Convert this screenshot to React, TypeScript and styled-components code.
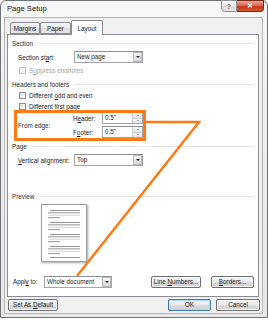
import React from "react";
import styled, { createGlobalStyle } from "styled-components";

const GlobalStyle = createGlobalStyle`
  html, body {
    margin: 0;
    padding: 0;
    background: #ffffff;
  }
`;

const ORANGE = "#ff7a14";

const Window = styled.div`
  position: relative;
  box-sizing: border-box;
  width: 268px;
  height: 318px;
  display: flex;
  flex-direction: column;
  padding: 0 4px 3px 3px;
  border: 1px solid #6f7378;
  border-radius: 6px 6px 0 0;
  background: linear-gradient(180deg, #f8f8f8 0%, #eeeeee 30%, #e8e8e8 100%);
  font-family: "Liberation Sans", Arial, sans-serif;
  font-size: 6.3px;
  color: #1b1b1b;
`;

const TitleBar = styled.div`
  height: 16px;
  display: flex;
  align-items: flex-start;
  justify-content: space-between;
`;

const Title = styled.div`
  padding-left: 3px;
  line-height: 15px;
  font-size: 7.6px;
  color: #111;
`;

const CaptionButtons = styled.div`
  display: flex;
  margin-top: -1px;
  margin-right: -1px;
`;

const CaptionButton = styled.div<{ $close?: boolean }>`
  box-sizing: border-box;
  width: ${(p) => (p.$close ? 27 : 16)}px;
  height: 12px;
  display: flex;
  align-items: center;
  justify-content: center;
  border: 1px solid ${(p) => (p.$close ? "#7a2a1c" : "#8d9196")};
  border-left-width: ${(p) => (p.$close ? 0 : 1)}px;
  border-radius: ${(p) => (p.$close ? "0 0 4px 0" : "0 0 0 4px")};
  background: ${(p) =>
    p.$close
      ? "linear-gradient(180deg, #e9a697 0%, #d8684e 45%, #c6391c 55%, #d2552f 100%)"
      : "linear-gradient(180deg, #fafafa 0%, #ebebeb 45%, #dcdcdc 55%, #e6e6e6 100%)"};
  color: ${(p) => (p.$close ? "#ffffff" : "#7b7f85")};
  font-size: 7px;
  font-weight: bold;
`;

const Client = styled.div`
  flex: 1;
  display: flex;
  flex-direction: column;
  border: 1px solid #b6b6b6;
  background: #f0f0f0;
`;

const TabStrip = styled.div`
  height: 16px;
  display: flex;
  align-items: flex-end;
  padding-left: 5px;
`;

const Tab = styled.div<{ $active?: boolean; $w: number }>`
  position: relative;
  z-index: ${(p) => (p.$active ? 2 : 0)};
  box-sizing: border-box;
  width: ${(p) => p.$w}px;
  height: ${(p) => (p.$active ? 15 : 12)}px;
  margin-bottom: ${(p) => (p.$active ? -1 : 0)}px;
  display: flex;
  align-items: center;
  justify-content: center;
  border: 1px solid #898c95;
  border-bottom: ${(p) => (p.$active ? "none" : "1px solid #898c95")};
  border-radius: 2px 2px 0 0;
  background: ${(p) =>
    p.$active
      ? "#ffffff"
      : "linear-gradient(180deg, #f4f4f4 0%, #ebebeb 50%, #dedede 51%, #e5e5e5 100%)"};
  color: #1b1b1b;
`;

const Panel = styled.div`
  position: relative;
  z-index: 1;
  box-sizing: border-box;
  height: 263px;
  margin: 0 3px 0 2px;
  padding: 0 4px;
  display: flex;
  flex-direction: column;
  border: 1px solid #898c95;
  background: #ffffff;
`;

const GroupHeading = styled.div<{ $mt: number }>`
  height: 10px;
  margin-top: ${(p) => p.$mt}px;
  display: flex;
  align-items: center;
  color: #2a2a2a;

  &::after {
    content: "";
    flex: 1;
    height: 1px;
    margin-left: 5px;
    background: #e4e4e4;
  }
`;

const FieldRow = styled.div<{ $mt: number }>`
  height: 12px;
  margin-top: ${(p) => p.$mt}px;
  padding-left: 6px;
  display: flex;
  align-items: center;
`;

const FieldLabel = styled.span<{ $w: number }>`
  flex: none;
  width: ${(p) => p.$w}px;
  white-space: nowrap;
`;

const SelectBox = styled.div<{ $w: number }>`
  box-sizing: border-box;
  flex: none;
  width: ${(p) => p.$w}px;
  height: 12px;
  display: flex;
  align-items: center;
  border: 1px solid #a3a6ad;
  border-top-color: #8e9198;
  background: #ffffff;
`;

const SelectText = styled.span`
  flex: 1;
  padding-left: 2px;
  line-height: 10px;
  white-space: nowrap;
`;

const SelectArrow = styled.span`
  box-sizing: border-box;
  width: 9px;
  height: 10px;
  display: flex;
  align-items: center;
  justify-content: center;
  border: 1px solid #b5b7bb;
  background: linear-gradient(180deg, #f7f7f7 0%, #e7e7e7 50%, #d9d9d9 100%);

  &::before {
    content: "";
    border-left: 2px solid transparent;
    border-right: 2px solid transparent;
    border-top: 2px solid #222;
  }
`;

const SpinBox = styled(SelectBox)`
  align-items: stretch;
`;

const SpinButtons = styled.span`
  width: 9px;
  display: flex;
  flex-direction: column;
  border-left: 1px solid #c9cbcf;
`;

const SpinHalf = styled.span<{ $down?: boolean }>`
  flex: 1;
  display: flex;
  align-items: center;
  justify-content: center;
  background: linear-gradient(180deg, #f6f6f6 0%, #e3e3e3 100%);
  border-bottom: ${(p) => (p.$down ? "none" : "1px solid #d0d2d6")};

  &::before {
    content: "";
    border-left: 1.5px solid transparent;
    border-right: 1.5px solid transparent;
    ${(p) =>
      p.$down ? "border-top: 1.5px solid #3f5f8a;" : "border-bottom: 1.5px solid #3f5f8a;"}
  }
`;

const CheckRow = styled.div<{ $mt: number; $disabled?: boolean }>`
  height: 10px;
  margin-top: ${(p) => p.$mt}px;
  padding-left: 7px;
  display: flex;
  align-items: center;
  color: ${(p) => (p.$disabled ? "#a4a4a4" : "#1b1b1b")};
`;

const CheckBox = styled.span<{ $disabled?: boolean }>`
  box-sizing: border-box;
  width: 7px;
  height: 7px;
  margin-right: 3px;
  border: 1px solid ${(p) => (p.$disabled ? "#c4c4c4" : "#8e8f8f")};
  background: ${(p) =>
    p.$disabled ? "#f4f4f4" : "linear-gradient(135deg, #d6d6d6 0%, #f4f4f4 60%, #ffffff 100%)"};
`;

const Caption = styled.span`
  white-space: pre;
`;

const EdgeGroup = styled.div`
  margin-top: 1px;
  padding-left: 6px;
  display: grid;
  grid-template-columns: 55px 29px 41px;
  grid-template-rows: 12px 12px;
  row-gap: 2px;
  align-items: center;
`;

const EdgeTitle = styled.span`
  grid-row: 1 / span 2;
`;

const PreviewPage = styled.div`
  box-sizing: border-box;
  width: 46px;
  height: 58px;
  margin: 3px 0 0 29px;
  border: 1px solid #9d9d9d;
  background: #ffffff;
  box-shadow: 1px 1px 2px rgba(0, 0, 0, 0.35);
`;

const ApplyRow = styled.div`
  height: 13px;
  margin-top: 13px;
  padding-left: 1px;
  display: flex;
  align-items: center;
`;

const Button = styled.div<{ $w: number; $default?: boolean }>`
  box-sizing: border-box;
  flex: none;
  width: ${(p) => p.$w}px;
  height: 12px;
  display: flex;
  align-items: center;
  justify-content: center;
  border: 1px solid ${(p) => (p.$default ? "#3c7fb1" : "#707070")};
  border-radius: 2px;
  background: linear-gradient(180deg, #f2f2f2 0%, #ebebeb 48%, #dddddd 52%, #cfcfcf 100%);
  box-shadow: ${(p) => (p.$default ? "inset 0 0 0 1px #a9dcf4" : "inset 0 0 0 1px #fbfbfb")};
  white-space: nowrap;
`;

const RightButtons = styled.div`
  margin-left: auto;
  display: flex;
  gap: 10px;
`;

const FooterRow = styled.div`
  height: 13px;
  margin-top: 1px;
  padding: 0 2px 0 3px;
  display: flex;
  align-items: center;
  gap: 5px;
`;

const Spacer = styled.div`
  flex: 1;
`;

const Overlay = styled.svg`
  position: absolute;
  z-index: 5;
  top: -1px;
  left: -1px;
  pointer-events: none;
`;

const paragraphs = [5, 17, 29, 41];

function PreviewLines() {
  return (
    <svg width="44" height="56" viewBox="0 0 44 56">
      {paragraphs.map((y) => (
        <g key={y}>
          <rect x="8" y={y} width="30" height="0.9" fill="#8c8c8c" />
          <rect x="6" y={y + 2.4} width="32" height="0.9" fill="#8c8c8c" />
          <rect x="6" y={y + 4.8} width="32" height="0.9" fill="#cfcfcf" />
          <rect x="6" y={y + 7.2} width="12" height="0.9" fill="#8c8c8c" />
        </g>
      ))}
      <rect x="8" y="52" width="30" height="0.9" fill="#8c8c8c" />
    </svg>
  );
}

function Select({ value, width }: { value: string; width: number }) {
  return (
    <SelectBox $w={width}>
      <SelectText>{value}</SelectText>
      <SelectArrow />
    </SelectBox>
  );
}

function Spin({ value }: { value: string }) {
  return (
    <SpinBox $w={41}>
      <SelectText>{value}</SelectText>
      <SpinButtons>
        <SpinHalf />
        <SpinHalf $down />
      </SpinButtons>
    </SpinBox>
  );
}

export default function App() {
  return (
    <>
      <GlobalStyle />
      <Window>
        <TitleBar>
          <Title>Page Setup</Title>
          <CaptionButtons>
            <CaptionButton>?</CaptionButton>
            <CaptionButton $close>✕</CaptionButton>
          </CaptionButtons>
        </TitleBar>
        <Client>
          <TabStrip>
            <Tab $w={30}>Margins</Tab>
            <Tab $w={31}>Paper</Tab>
            <Tab $w={32} $active>
              Layout
            </Tab>
          </TabStrip>
          <Panel>
            <GroupHeading $mt={3}>Section</GroupHeading>
            <FieldRow $mt={3}>
              <FieldLabel $w={56}>
                Section st<u>a</u>rt:
              </FieldLabel>
              <Select value="New page" width={69} />
            </FieldRow>
            <CheckRow $mt={2} $disabled>
              <CheckBox $disabled />
              <Caption>
                S<u>u</u>ppress endnotes
              </Caption>
            </CheckRow>

            <GroupHeading $mt={4}>Headers and footers</GroupHeading>
            <CheckRow $mt={1}>
              <CheckBox />
              <Caption>
                Different <u>o</u>dd and even
              </Caption>
            </CheckRow>
            <CheckRow $mt={1}>
              <CheckBox />
              <Caption>
                Different first <u>p</u>age
              </Caption>
            </CheckRow>
            <EdgeGroup>
              <EdgeTitle>From edge:</EdgeTitle>
              <span>
                H<u>e</u>ader:
              </span>
              <Spin value={'0.5"'} />
              <span>
                F<u>o</u>oter:
              </span>
              <Spin value={'0.5"'} />
            </EdgeGroup>

            <GroupHeading $mt={3}>Page</GroupHeading>
            <FieldRow $mt={3}>
              <FieldLabel $w={56}>
                <u>V</u>ertical alignment:
              </FieldLabel>
              <Select value="Top" width={69} />
            </FieldRow>

            <GroupHeading $mt={25}>Preview</GroupHeading>
            <PreviewPage>
              <PreviewLines />
            </PreviewPage>

            <ApplyRow>
              <FieldLabel $w={31}>
                Appl<u>y</u> to:
              </FieldLabel>
              <Select value="Whole document" width={68} />
              <RightButtons>
                <Button $w={50}>
                  <Caption>
                    Line <u>N</u>umbers...
                  </Caption>
                </Button>
                <Button $w={43}>
                  <Caption>
                    <u>B</u>orders...
                  </Caption>
                </Button>
              </RightButtons>
            </ApplyRow>
          </Panel>
          <FooterRow>
            <Button $w={50}>
              <Caption>
                Set As <u>D</u>efault
              </Caption>
            </Button>
            <Spacer />
            <Button $w={43} $default>
              OK
            </Button>
            <Button $w={44}>Cancel</Button>
          </FooterRow>
        </Client>
        <Overlay width="268" height="320" viewBox="0 0 268 320">
          <rect
            x="15.5"
            y="111.5"
            width="129"
            height="28"
            fill="none"
            stroke={ORANGE}
            strokeWidth="3"
          />
          <polyline
            points="146,122 199,122 77,276"
            fill="none"
            stroke={ORANGE}
            strokeWidth="2.5"
            strokeLinejoin="miter"
          />
        </Overlay>
      </Window>
    </>
  );
}
